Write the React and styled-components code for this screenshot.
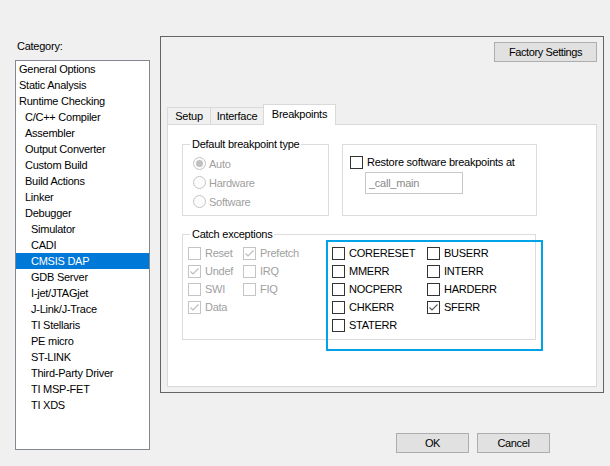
import styled, { createGlobalStyle, css } from "styled-components";

const GlobalStyle = createGlobalStyle`
  html, body {
    margin: 0;
    padding: 0;
    background: #f0f0f0;
  }
  body {
    font-family: "Liberation Sans", Arial, sans-serif;
    font-size: 11px;
    letter-spacing: -0.25px;
    color: #000;
  }
`;

const categories = [
  { label: "General Options", level: 0 },
  { label: "Static Analysis", level: 0 },
  { label: "Runtime Checking", level: 0 },
  { label: "C/C++ Compiler", level: 1 },
  { label: "Assembler", level: 1 },
  { label: "Output Converter", level: 1 },
  { label: "Custom Build", level: 1 },
  { label: "Build Actions", level: 1 },
  { label: "Linker", level: 1 },
  { label: "Debugger", level: 1 },
  { label: "Simulator", level: 2 },
  { label: "CADI", level: 2 },
  { label: "CMSIS DAP", level: 2, selected: true },
  { label: "GDB Server", level: 2 },
  { label: "I-jet/JTAGjet", level: 2 },
  { label: "J-Link/J-Trace", level: 2 },
  { label: "TI Stellaris", level: 2 },
  { label: "PE micro", level: 2 },
  { label: "ST-LINK", level: 2 },
  { label: "Third-Party Driver", level: 2 },
  { label: "TI MSP-FET", level: 2 },
  { label: "TI XDS", level: 2 },
];

const basicExceptions = [
  { label: "Reset", checked: false },
  { label: "Prefetch", checked: true },
  { label: "Undef", checked: true },
  { label: "IRQ", checked: false },
  { label: "SWI", checked: false },
  { label: "FIQ", checked: false },
  { label: "Data", checked: true },
];

const faultExceptions = [
  { label: "CORERESET", checked: false },
  { label: "BUSERR", checked: false },
  { label: "MMERR", checked: false },
  { label: "INTERR", checked: false },
  { label: "NOCPERR", checked: false },
  { label: "HARDERR", checked: false },
  { label: "CHKERR", checked: false },
  { label: "SFERR", checked: true },
  { label: "STATERR", checked: false },
];

const CheckBox = ({ checked, disabled, label }) => (
  <CheckRow $disabled={disabled}>
    <Box $disabled={disabled}>
      {checked && (
        <svg width="11" height="11" viewBox="0 0 11 11">
          <polyline
            points="1.5,5.5 4,8 9.5,2.5"
            fill="none"
            stroke={disabled ? "#bcbcbc" : "#5a5a5a"}
            strokeWidth="1.1"
          />
        </svg>
      )}
    </Box>
    {label && <span>{label}</span>}
  </CheckRow>
);

const Radio = ({ checked, label }) => (
  <RadioRow>
    <Circle>{checked && <Dot />}</Circle>
    <span>{label}</span>
  </RadioRow>
);

export default function App() {
  return (
    <>
      <GlobalStyle />
      <Window>
        <LeftColumn>
          <CategoryLabel>Category:</CategoryLabel>
          <ListBox>
            {categories.map((c) => (
              <ListItem key={c.label} $level={c.level} $selected={c.selected}>
                {c.label}
              </ListItem>
            ))}
          </ListBox>
        </LeftColumn>

        <RightColumn>
          <Panel>
            <TopBar>
              <Button $width={103}>Factory Settings</Button>
            </TopBar>
            <TabStrip>
              <Tab $width={44}>Setup</Tab>
              <Tab $width={54}>Interface</Tab>
              <Tab $width={73} $active>
                Breakpoints
              </Tab>
            </TabStrip>
            <TabPane>
              <GroupRow>
                <Group $width={147} $height={72}>
                  <Legend>Default breakpoint type</Legend>
                  <RadioList>
                    <Radio checked label="Auto" />
                    <Radio label="Hardware" />
                    <Radio label="Software" />
                  </RadioList>
                </Group>
                <Group $width={195} $height={72}>
                  <RestoreBody>
                    <CheckBox label="Restore software breakpoints at" />
                    <TextBox>_call_main</TextBox>
                  </RestoreBody>
                </Group>
              </GroupRow>
              <Group $width={354} $height={106} $top={18}>
                <Legend>Catch exceptions</Legend>
                <CatchBody>
                  <BasicGrid>
                    {basicExceptions.map((e) => (
                      <CheckBox key={e.label} disabled checked={e.checked} label={e.label} />
                    ))}
                  </BasicGrid>
                  <FaultGrid>
                    {faultExceptions.map((e) => (
                      <CheckBox key={e.label} checked={e.checked} label={e.label} />
                    ))}
                  </FaultGrid>
                </CatchBody>
              </Group>
            </TabPane>
          </Panel>
          <DialogButtons>
            <Button $width={73}>OK</Button>
            <Button $width={73}>Cancel</Button>
          </DialogButtons>
        </RightColumn>
      </Window>
    </>
  );
}

const Window = styled.div`
  width: 610px;
  height: 466px;
  display: flex;
  padding-left: 15px;
  box-sizing: border-box;
  overflow: hidden;
`;

const LeftColumn = styled.div`
  width: 135px;
  padding-top: 39px;
  display: flex;
  flex-direction: column;
`;

const CategoryLabel = styled.div`
  line-height: 14px;
  margin-left: 2px;
  margin-bottom: 7px;
`;

const ListBox = styled.div`
  height: 390px;
  box-sizing: border-box;
  border: 1px solid #828790;
  background: #fff;
`;

const ListItem = styled.div`
  height: 16px;
  box-sizing: border-box;
  padding-top: 1px;
  line-height: 15px;
  padding-left: ${(p) => 3 + p.$level * 6}px;
  white-space: nowrap;
  ${(p) =>
    p.$selected &&
    css`
      background: #0078d7;
      color: #fff;
    `}
`;

const RightColumn = styled.div`
  margin-left: 10px;
  padding-top: 36px;
  display: flex;
  flex-direction: column;
`;

const Panel = styled.div`
  width: 444px;
  height: 357px;
  box-sizing: border-box;
  border: 1px solid #646464;
  padding: 5px 6px 0;
  display: flex;
  flex-direction: column;
`;

const TopBar = styled.div`
  display: flex;
  justify-content: flex-end;
`;

const Button = styled.div`
  width: ${(p) => p.$width}px;
  height: 20px;
  box-sizing: border-box;
  border: 1px solid #adadad;
  background: #e1e1e1;
  display: flex;
  align-items: center;
  justify-content: center;
  letter-spacing: -0.4px;
`;

const TabStrip = styled.div`
  margin-top: 42px;
  height: 20px;
  display: flex;
  align-items: flex-start;
`;

const Tab = styled.div`
  width: ${(p) => p.$width}px;
  box-sizing: border-box;
  border: 1px solid #d9d9d9;
  border-bottom: none;
  margin-left: -1px;
  display: flex;
  justify-content: center;
  &:first-child {
    margin-left: 0;
  }
  ${(p) =>
    p.$active
      ? css`
          position: relative;
          z-index: 1;
          height: 21px;
          background: #fff;
          line-height: 18px;
        `
      : css`
          margin-top: 3px;
          height: 17px;
          background: #f0f0f0;
          line-height: 17px;
        `}
`;

const TabPane = styled.div`
  height: 263px;
  box-sizing: border-box;
  border: 1px solid #d9d9d9;
  background: #fff;
  padding: 19px 0 0 14px;
`;

const GroupRow = styled.div`
  display: flex;
  gap: 13px;
`;

const Group = styled.div`
  position: relative;
  width: ${(p) => p.$width}px;
  height: ${(p) => p.$height}px;
  margin-top: ${(p) => p.$top || 0}px;
  box-sizing: border-box;
  border: 1px solid #dcdcdc;
`;

const Legend = styled.span`
  position: absolute;
  left: 7px;
  top: -8px;
  padding: 0 2px;
  line-height: 14px;
  background: #fff;
  white-space: nowrap;
`;

const RadioList = styled.div`
  padding: 9px 0 0 10px;
  display: flex;
  flex-direction: column;
`;

const RadioRow = styled.div`
  height: 19px;
  display: flex;
  align-items: center;
  gap: 3px;
  color: #a0a0a0;
`;

const Circle = styled.div`
  width: 13px;
  height: 13px;
  box-sizing: border-box;
  border: 1px solid #c4c4c4;
  border-radius: 50%;
  background: #fcfcfc;
  display: flex;
  align-items: center;
  justify-content: center;
`;

const Dot = styled.div`
  width: 7px;
  height: 7px;
  border-radius: 50%;
  background: #c0c0c0;
`;

const RestoreBody = styled.div`
  padding: 9px 0 0 7px;
`;

const CheckRow = styled.div`
  height: 18px;
  display: flex;
  align-items: center;
  gap: 4px;
  white-space: nowrap;
  color: ${(p) => (p.$disabled ? "#a0a0a0" : "#000")};
  ${RestoreBody} & {
    height: 16px;
  }
`;

const Box = styled.div`
  width: 13px;
  height: 13px;
  box-sizing: border-box;
  border: 1px solid ${(p) => (p.$disabled ? "#c4c4c4" : "#333")};
  background: #fff;
  display: flex;
  align-items: center;
  justify-content: center;
`;

const TextBox = styled.div`
  width: 98px;
  height: 22px;
  box-sizing: border-box;
  margin: 2px 0 0 15px;
  border: 1px solid #c8c8c8;
  padding-left: 3px;
  line-height: 20px;
  color: #8a8a8a;
`;

const CatchBody = styled.div`
  display: flex;
  padding: 9px 0 0 5px;
`;

const BasicGrid = styled.div`
  display: grid;
  grid-template-columns: 55px 55px;
  align-content: start;
`;

const FaultGrid = styled.div`
  position: relative;
  margin-left: 34px;
  display: grid;
  grid-template-columns: 95px 95px;
  align-content: start;
  &::before {
    content: "";
    position: absolute;
    left: -6px;
    top: -4px;
    width: 217px;
    height: 111px;
    box-sizing: border-box;
    border: 2px solid #00a2e8;
    pointer-events: none;
  }
`;

const DialogButtons = styled.div`
  margin-top: 40px;
  padding-left: 236px;
  display: flex;
  gap: 8px;
`;
